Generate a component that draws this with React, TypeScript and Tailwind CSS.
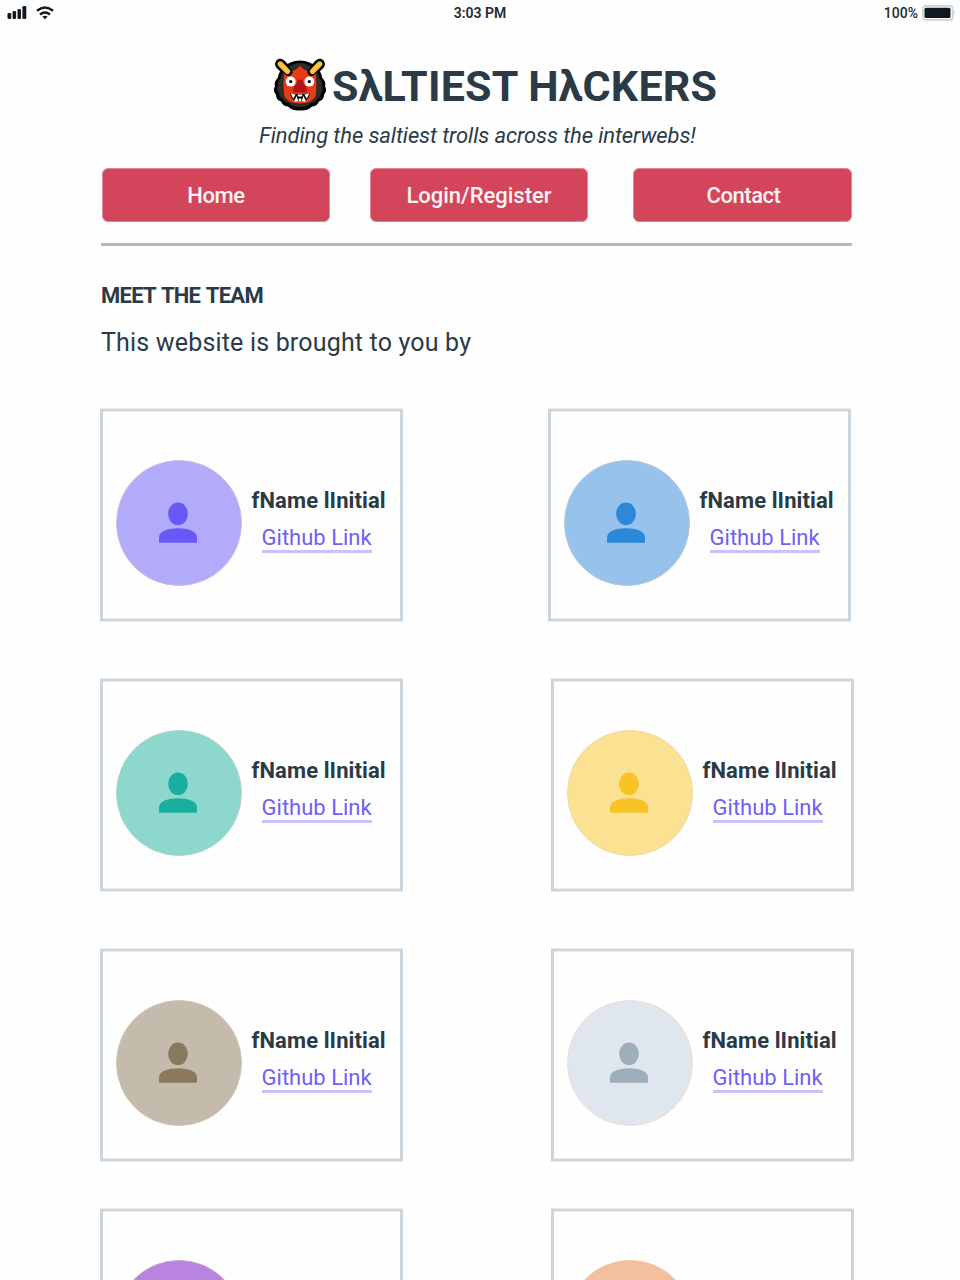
type Member = { circle: string; ring: string; icon: string; name?: string; link?: string };

const person = { name: "fName lInitial", link: "Github Link" };

const rows: { className: string; members: [Member, Member] }[] = [
  {
    className: "pr-[109px]",
    members: [
      { circle: "bg-[#b2abfa]", ring: "border-[#cdb9e2]", icon: "text-[#6759f5]", ...person },
      { circle: "bg-[#97c2eb]", ring: "border-[#b8c4d4]", icon: "text-[#2c88d9]", ...person },
    ],
  },
  {
    className: "mt-[58px] pr-[106px]",
    members: [
      { circle: "bg-[#8ed7cc]", ring: "border-[#b3d3c5]", icon: "text-[#1aae9f]", ...person },
      { circle: "bg-[#fbe192]", ring: "border-[#f3d9a0]", icon: "text-[#f7c325]", ...person },
    ],
  },
  {
    className: "mt-[58px] pr-[106px]",
    members: [
      { circle: "bg-[#c5bbad]", ring: "border-[#d3c3b5]", icon: "text-[#897a5f]", ...person },
      { circle: "bg-[#dfe6ed]", ring: "border-[#ecdfd8]", icon: "text-[#9eadba]", ...person },
    ],
  },
  {
    className: "mt-[48px] pr-[106px]",
    members: [
      { circle: "bg-[#b984e0]", ring: "border-[#cb9cd4]", icon: "text-[#730fc3]" },
      { circle: "bg-[#f3c09d]", ring: "border-[#efc4a8]", icon: "text-[#e8833a]" },
    ],
  },
];

function Oni() {
  return (
    <svg className="size-[60px] shrink-0" viewBox="0 0 60 60">
      <path d="M10.300 10 19 19M49.700 10 41 19" stroke="#000" strokeWidth="10.500" strokeLinecap="round" />
      <path
        fill="#000"
        d="M30 6.500c7 0 13 3 16 7 4 3 6 7 6 10 3 3 4 6 3 9 2 3 1 6-1 8 0 4-2 6-5 7-1 3-4 5-7 5-3 3-6 4-12 4s-9-1-12-4c-3 0-6-2-7-5-3-1-5-3-5-7-2-2-3-5-1-8-1-3 0-6 3-9 0-3 2-7 6-10 3-4 9-7 16-7z"
      />
      <path
        fill="#2d2d2d"
        d="M30 9c6 0 12 3 15 7 3 2 4 5 4 8 2 2 4 5 3 8 1 3 1 5-1 7 0 3-2 5-4 6-1 3-4 4-6 4-3 3-6 4-11 4s-8-1-11-4c-2 0-5-1-6-4-2-1-4-3-4-6-2-2-2-4-1-7-1-3 1-6 3-8 0-3 1-6 4-8 3-4 9-7 15-7z"
      />
      <path
        fill="#e83a14"
        d="M30 11.500c-3 4.500-8 6-15.500 7.500-1.200 8-1.200 17.500 0 23 1.500 4.500 8 7.500 15.500 7.500s14-3 15.500-7.500c1.200-5.500 1.200-15 0-23-7.500-1.500-12.500-3-15.500-7.500z"
      />
      <path
        fill="#b3131d"
        d="M28 25c1 1.500 3 1.500 4 0 .8 4 2 6.500 4.500 8.500 2 2.500 0 5-2.500 5-1.500 0-2.500-.5-4-.5s-2.500.5-4 .5c-2.500 0-4.500-2.500-2.500-5 2.500-2 3.700-4.500 4.500-8.500z"
      />
      <path d="M10.300 10 18.500 18M49.700 10 41.500 18" stroke="#000" strokeWidth="7.800" strokeLinecap="round" />
      <path d="M10.300 10 17.500 17.300M49.700 10 42.500 17.300" stroke="#fcc23c" strokeWidth="5.400" strokeLinecap="round" />
      <circle cx="20.700" cy="27.600" r="5" fill="#fff" />
      <circle cx="39.300" cy="27.600" r="5" fill="#fff" />
      <circle cx="20.700" cy="27.600" r="1.600" />
      <circle cx="39.300" cy="27.600" r="1.600" />
      <path d="M20.300 39c6 1.700 13.400 1.700 19.400 0 0 4.500-3 8.700-9.700 8.700s-9.700-4.200-9.700-8.700z" />
      <path
        fill="#fff"
        d="M20.600 39.300 25.600 40.400 23.300 44.800zM39.400 39.300 34.400 40.400 36.700 44.800zM26.500 42l2 5.500h-4.500zM33.500 42l2.500 5.500h-4.500zM27.700 40.500h4.600v2h-4.600zM28.700 44.500h2.600v3h-2.600z"
      />
    </svg>
  );
}

function StatusBar() {
  return (
    <div className="grid h-[26px] grid-cols-3 items-center pl-[7px] pr-[4px] text-sm leading-[26px] text-[#1f2933]">
      <div className="flex items-center gap-[9px] text-[#101820]">
        <svg className="h-[14px] w-5" viewBox="0 0 20 14" fill="currentColor">
          <rect x="0.500" y="7" width="3.700" height="6" rx="1.200" />
          <rect x="5.600" y="5" width="3.500" height="8" rx="1.200" />
          <rect x="10.500" y="3" width="3.500" height="10" rx="1.200" />
          <rect x="15.400" y="0" width="3.900" height="13" rx="1.200" />
        </svg>
        <svg className="h-[14px] w-[18px]" viewBox="0 0 18 14" fill="none" stroke="currentColor" strokeWidth="2.400">
          <path d="M1 4.800Q9-1.800 17 4.800M4 8.500Q9 4.300 14 8.500" />
          <path d="M6.300 10.500Q9 9 11.700 10.500L9 13.200z" fill="currentColor" stroke="none" />
        </svg>
      </div>
      <div className="mr-[3px] text-center font-semibold">3:03 PM</div>
      <div className="flex items-center justify-end gap-[4px]">
        <span className="font-medium">100%</span>
        <svg className="h-4 w-[34px]" viewBox="0 0 34 16">
          <rect x="0.900" y="0.900" width="29.800" height="14" rx="3" fill="#fff" stroke="#ced2d6" strokeWidth="1.800" />
          <rect x="2.500" y="2.700" width="26" height="10.400" rx="1.500" fill="#101820" />
          <path d="M31.800 5.500Q34 8 31.800 10.500z" fill="#ced2d6" />
        </svg>
      </div>
    </div>
  );
}

function Card({ circle, ring, icon, name, link }: Member) {
  return (
    <article className="flex h-[212px] w-[303px] shrink-0 items-start border-x-3 border-y-2 border-[#cad5dd] pl-[13px] shadow-[0_1px_0_#e6ecf0,0_-1px_0_#e6ecf0,inset_0_1px_0_#e6ecf0,inset_0_-1px_0_#e6ecf0]">
      <div className={`mt-[48.500px] flex size-[126px] shrink-0 items-center justify-center rounded-full border pb-px pr-[2px] ${circle} ${ring} ${icon}`}>
        <svg className="h-[41px] w-[38px]" viewBox="0 0 38 41" fill="currentColor">
          <rect x="9.200" y="0.500" width="19.600" height="22.600" rx="9.800" ry="10.800" />
          <path d="M0 40.700V35.500C0 29 9 26.300 19 26.300S38 29 38 35.500V40.700z" />
        </svg>
      </div>
      {name && (
        <div className="ml-[9.500px] mt-[75px] flex flex-col items-center text-[22px] leading-[30px]">
          <h3 className="whitespace-nowrap font-bold tracking-[0.1px] text-[#2b3a47]">{name}</h3>
          <a href="#" className="mr-[4px] mt-[7px] h-[30px] whitespace-nowrap border-b-3 border-[#c8c1fb] text-[#6e5ff5]">
            {link}
          </a>
        </div>
      )}
    </article>
  );
}

function NavButton({ label, className }: { label: string; className: string }) {
  return (
    <button
      className={`h-[54px] rounded-md border border-[#e08695] bg-[#d3455b] text-[22px] font-medium leading-[30px] text-[#fdf3f4] ${className}`}
    >
      {label}
    </button>
  );
}

export default function App() {
  return (
    <div className="h-[1280px] w-[960px] overflow-hidden bg-[#fefefe] font-[Roboto,'Liberation_Sans',sans-serif] text-[#2b3a47]">
      <StatusBar />
      <header className="pt-[28px]">
        <div className="flex h-[60px] items-center pl-[270px]">
          <Oni />
          <h1 className="ml-[2px] mt-[4px] whitespace-nowrap text-[43px] font-bold leading-[52px] tracking-[0.18px]">
            SλLTIEST HλCKERS
          </h1>
        </div>
        <p className="mt-[7px] whitespace-nowrap pl-[259px] text-[22px] italic leading-[30px] tracking-[-0.1px]">
          Finding the saltiest trolls across the interwebs!
        </p>
        <nav className="mt-[17px] flex pl-[102px]">
          <NavButton label="Home" className="w-[228px] pt-px tracking-[-0.4px]" />
          <NavButton label="Login/Register" className="ml-[40px] w-[218px] pt-px" />
          <NavButton label="Contact" className="ml-[45px] w-[219px] pl-[8px] pr-[6px] pt-px tracking-[-0.45px]" />
        </nav>
        <hr className="ml-[101px] mt-[21px] h-[3px] w-[751px] border-0 bg-[#acbac6]" />
      </header>
      <main>
        <h2 className="mt-[35px] pl-[101px] text-[22px] font-bold leading-[30px] tracking-[-0.75px] [word-spacing:1.5px]">
          MEET THE TEAM
        </h2>
        <p className="mt-[14px] pl-[101px] text-[25px] leading-[36px] tracking-[0.18px]">This website is brought to you by</p>
        <div className="mt-[48px] flex flex-col">
          {rows.map((row, i) => (
            <section key={i} className={`flex justify-between pl-[100px] ${row.className}`}>
              {row.members.map((member) => (
                <Card key={member.circle} {...member} />
              ))}
            </section>
          ))}
        </div>
      </main>
    </div>
  );
}
